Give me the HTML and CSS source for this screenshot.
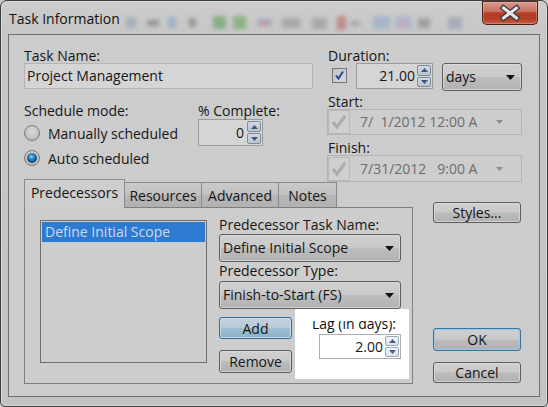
FILE: index.html
```html
<!DOCTYPE html>
<html>
<head>
<meta charset="utf-8">
<title>Task Information</title>
<link rel="stylesheet" href="styles.css">
</head>
<body>
<div class="window">
  <div class="titlebar">
    <div class="title">Task Information</div>
    <svg class="blur-icons" width="345" height="22" viewBox="0 0 345 22">
      <g>
        <rect x="6" y="4" width="10" height="11" fill="#8d9cb4"/>
        <rect x="27" y="7" width="12" height="6" fill="#6a6a6a"/>
        <rect x="48" y="4" width="8" height="11" fill="#7d9cc8"/>
        <rect x="69" y="5" width="7" height="9" fill="#6e6e6e"/>
        <rect x="93" y="3" width="13" height="13" fill="#4f9a4f"/>
        <rect x="113" y="3" width="13" height="13" fill="#58a04a"/>
        <rect x="137" y="6" width="15" height="7" fill="#8a8ec0"/>
        <rect x="140" y="8" width="6" height="5" fill="#c07070"/>
        <rect x="162" y="5" width="18" height="10" fill="#8e8e8e"/>
        <rect x="192" y="5" width="15" height="11" fill="#8e8e8e"/>
        <rect x="217" y="3" width="9" height="14" fill="#b85a5a"/>
        <rect x="230" y="8" width="10" height="5" fill="#909090"/>
        <rect x="253" y="3" width="17" height="13" fill="#8aa6cc"/>
        <rect x="275" y="3" width="17" height="13" fill="#a0a6d0"/>
        <rect x="280" y="8" width="6" height="6" fill="#c88aa0"/>
        <rect x="298" y="5" width="12" height="10" fill="#7e7e7e"/>
        <rect x="328" y="4" width="14" height="12" fill="#8a98b0"/>
      </g>
    </svg>
    <div class="close">
      <svg width="54" height="22" viewBox="0 0 54 22">
        <path d="M20.5 6 L33.5 16 M20.5 16 L33.5 6" stroke="#3a3a3a" stroke-width="5.5" stroke-linecap="square" fill="none"/>
        <path d="M20.5 6 L33.5 16 M20.5 16 L33.5 6" stroke="#e6e6e6" stroke-width="3" stroke-linecap="square" fill="none"/>
      </svg>
    </div>
  </div>

  <div class="client">
    <div class="top">
      <div class="left">
        <div class="lbl">Task Name:</div>
        <div class="textbox">Project Management</div>
        <div class="sched">
          <div class="sched-mode">
            <div class="lbl">Schedule mode:</div>
            <div class="radio-row first"><span class="radio"></span><span class="rtext">Manually scheduled</span></div>
            <div class="radio-row"><span class="radio on"></span><span class="rtext">Auto scheduled</span></div>
          </div>
          <div class="pct">
            <div class="lbl">% Complete:</div>
            <div class="spin pct-spin">
              <span class="val">0</span>
              <span class="sbtns">
                <span class="sb"><svg width="7" height="4" viewBox="0 0 7 4"><path d="M0 4 L3.5 0 L7 4Z"/></svg></span>
                <span class="sb"><svg width="7" height="4" viewBox="0 0 7 4"><path d="M0 0 L7 0 L3.5 4Z"/></svg></span>
              </span>
            </div>
          </div>
        </div>
      </div>

      <div class="right">
        <div class="lbl">Duration:</div>
        <div class="dur-row">
          <span class="check"><svg width="13" height="13" viewBox="0 0 13 13"><path d="M3 6.5 L5.5 9.5 L10 2.5" stroke="#2d4d8f" stroke-width="2" fill="none"/></svg></span>
          <div class="spin dur-spin">
            <span class="val">21.00</span>
            <span class="sbtns">
              <span class="sb"><svg width="7" height="4" viewBox="0 0 7 4"><path d="M0 4 L3.5 0 L7 4Z"/></svg></span>
              <span class="sb"><svg width="7" height="4" viewBox="0 0 7 4"><path d="M0 0 L7 0 L3.5 4Z"/></svg></span>
            </span>
          </div>
          <div class="combo days"><span>days</span><svg class="arr" width="9" height="5" viewBox="0 0 9 5"><path d="M0 0 L9 0 L4.5 5Z"/></svg></div>
        </div>
        <div class="lbl start-lbl">Start:</div>
        <div class="picker">
          <span class="pchk"><svg width="20" height="22" viewBox="0 0 20 22"><path d="M4 11 L8 16 L16 5" stroke="#acacac" stroke-width="3" fill="none"/></svg></span>
          <span class="ptext">7/  1/2012 12:00 A</span>
          <svg class="parr" width="7" height="4" viewBox="0 0 7 4"><path d="M0 0 L7 0 L3.5 4Z"/></svg>
        </div>
        <div class="lbl finish-lbl">Finish:</div>
        <div class="picker finish">
          <span class="pchk"><svg width="20" height="22" viewBox="0 0 20 22"><path d="M4 11 L8 16 L16 5" stroke="#acacac" stroke-width="3" fill="none"/></svg></span>
          <span class="ptext">7/31/2012   9:00 A</span>
          <svg class="parr" width="7" height="4" viewBox="0 0 7 4"><path d="M0 0 L7 0 L3.5 4Z"/></svg>
        </div>
      </div>
    </div>

    <div class="bottom">
      <div class="tabs-wrap">
        <div class="tabs">
          <div class="tab sel t-pred">Predecessors</div>
          <div class="tab t-res">Resources</div>
          <div class="tab t-adv">Advanced</div>
          <div class="tab t-notes">Notes</div>
        </div>
        <div class="panel">
          <div class="listbox"><div class="item sel">Define Initial Scope</div></div>
          <div class="pred">
            <div class="plabel">Predecessor Task Name:</div>
            <div class="combo pcombo"><span>Define Initial Scope</span><svg class="arr" width="9" height="5" viewBox="0 0 9 5"><path d="M0 0 L9 0 L4.5 5Z"/></svg></div>
            <div class="plabel t2">Predecessor Type:</div>
            <div class="combo pcombo"><span>Finish-to-Start (FS)</span><svg class="arr" width="9" height="5" viewBox="0 0 9 5"><path d="M0 0 L9 0 L4.5 5Z"/></svg></div>
            <div class="pred-bottom">
              <div class="btn-col">
                <div class="btn add">Add</div>
                <div class="btn remove">Remove</div>
              </div>
              <div class="hilite">
                <div class="lag-clip"><div class="lag-lbl">Lag (in days):</div></div>
                <div class="spin lag-spin">
                  <span class="val">2.00</span>
                  <span class="sbtns">
                    <span class="sb"><svg width="7" height="4" viewBox="0 0 7 4"><path d="M0 4 L3.5 0 L7 4Z"/></svg></span>
                    <span class="sb"><svg width="7" height="4" viewBox="0 0 7 4"><path d="M0 0 L7 0 L3.5 4Z"/></svg></span>
                  </span>
                </div>
              </div>
            </div>
          </div>
        </div>
      </div>
      <div class="side-btns">
        <div class="btn styles">Styles...</div>
        <div class="btn ok">OK</div>
        <div class="btn cancel">Cancel</div>
      </div>
    </div>
  </div>
</div>
</body>
</html>
```

FILE: styles.css
```css
* { box-sizing: border-box; }
html, body { margin: 0; padding: 0; }
body {
  width: 548px;
  height: 407px;
  overflow: hidden;
  background: #c9c9c9;
  font-family: "Open Sans", "Noto Sans", sans-serif;
  font-size: 14px;
  color: #161616;
}

.window {
  width: 548px;
  height: 407px;
  border: 1px solid #3e3e3e;
  border-radius: 7px 7px 5px 5px;
  background: linear-gradient(180deg, #cdcdcd 0, #c7c7c7 30px, #c3c3c3 100%);
  box-shadow: inset 1px 1px 0 #dadada, inset -1px -1px 0 #d4d4d4;
  display: flex;
  flex-direction: column;
}

/* title bar */
.titlebar {
  height: 33px;
  flex-shrink: 0;
  display: flex;
  align-items: flex-start;
}
.title {
  margin: 9px 0 0 8px;
  width: 111px;
  line-height: 18px;
  white-space: nowrap;
  color: #101010;
}
.blur-icons {
  margin-top: 12px;
  flex-shrink: 0;
  filter: blur(2.2px);
  opacity: 0.55;
}
.close {
  margin-left: auto;
  margin-right: 9px;
  width: 56px;
  height: 24px;
  border: 1px solid #4b2017;
  border-top-color: #5a2a20;
  border-radius: 0 0 5px 5px;
  background: linear-gradient(180deg, #d69a90 0%, #c97262 42%, #b53c25 50%, #b4402a 78%, #c85c40 100%);
  box-shadow: inset 0 0 0 1px rgba(255, 220, 210, 0.3);
}
.close svg { display: block; }

/* client area */
.client {
  margin: 0 7px;
  height: 363px;
  border: 1px solid #6f6f6f;
  background: #cccccc;
}

.lbl {
  height: 16px;
  line-height: 17px;
  white-space: nowrap;
}

.top {
  display: flex;
  height: 144px;
  padding-left: 15px;
}
.left { width: 289px; padding-top: 12px; flex-shrink: 0; }
.textbox {
  height: 26px;
  border: 1px solid #b4b4b4;
  background: #d5d5d5;
  line-height: 24px;
  padding-left: 2px;
  white-space: nowrap;
}
.sched { display: flex; margin-top: 13px; }
.sched-mode { width: 174px; }
.radio-row { height: 25px; display: flex; align-items: center; }
.radio-row.first { margin-top: 2px; }
.radio {
  width: 16px;
  height: 16px;
  border-radius: 50%;
  border: 1px solid #7b7b7b;
  background: radial-gradient(circle at 50% 40%, #dadada 0, #cacaca 45%, #a9a9a9 100%);
  margin-right: 8px;
  flex-shrink: 0;
  display: flex;
  align-items: center;
  justify-content: center;
}
.radio.on::after {
  content: "";
  width: 10px;
  height: 10px;
  border-radius: 50%;
  background: radial-gradient(circle at 45% 38%, #9fe0ff 0, #3f98d6 22%, #145a90 55%, #0a2640 100%);
}
.rtext { padding-top: 2px; line-height: 19px; white-space: nowrap; }

.pct-spin { margin-top: 1px; width: 65px; height: 27px; }

/* spin boxes */
.spin {
  display: flex;
  border: 1px solid #9c9c9c;
  background: #d5d5d5;
}
.spin .val {
  flex: 1;
  text-align: right;
  padding-right: 3px;
  line-height: 24px;
}
.pct-spin .val { line-height: 25px; }
.sbtns {
  display: flex;
  flex-direction: column;
  width: 15px;
  padding: 1px 1px 1px 0;
  gap: 1px;
  flex-shrink: 0;
}
.sb {
  flex: 1;
  border: 1px solid #7f8ca0;
  border-radius: 2px;
  background: linear-gradient(180deg, #d4d9df, #bcc3cc);
  display: flex;
  align-items: center;
  justify-content: center;
}
.sb svg { display: block; fill: #3d5583; }

.right { margin-left: 14px; width: 195px; padding-top: 12px; flex-shrink: 0; }
.right .lbl { padding-left: 1px; }
.dur-row { display: flex; height: 28px; align-items: flex-start; }
.check {
  width: 15px;
  height: 15px;
  margin: 5px 0 0 5px;
  border: 1px solid #777777;
  background: linear-gradient(135deg, #bfc3ca, #d8d9dc);
  display: flex;
  align-items: center;
  justify-content: center;
}
.check svg { display: block; }
.dur-spin { margin-left: 9px; width: 77px; height: 26px; }
.dur-spin .val { padding-right: 2px; }

.combo {
  display: flex;
  align-items: center;
  border: 1px solid #5f5f5f;
  border-radius: 3px;
  background: linear-gradient(180deg, #d0d0d0 0%, #c9c9c9 48%, #bdbdbd 52%, #b2b2b2 100%);
  box-shadow: inset 0 0 0 1px rgba(222, 222, 222, 0.7);
  padding-left: 3px;
  line-height: 26px;
  white-space: nowrap;
}
.combo .arr { margin-left: auto; margin-right: 6px; display: block; fill: #111; }
.days { margin-left: 9px; width: 80px; height: 28px; }

.start-lbl { margin-top: 2px; }
.finish-lbl { margin-top: 4px; }
.picker {
  display: flex;
  align-items: center;
  height: 26px;
  border: 1px solid #b3b3b3;
  background: #cdcdcd;
  color: #6c6c6c;
  line-height: 24px;
}
.picker.finish { height: 27px; }
.pchk {
  width: 22px;
  height: 24px;
  border: 1px solid #b9b9b9;
  background: #cfcfcf;
  flex-shrink: 0;
}
.pchk svg { display: block; }
.ptext {
  margin-left: 10px;
  white-space: pre;
}
.parr { margin-left: auto; margin-right: 18px; display: block; fill: #8d8d8d; }

/* bottom area */
.bottom { display: flex; padding-left: 15px; height: 205px; }
.tabs-wrap { width: 389px; display: flex; flex-direction: column; flex-shrink: 0; }
.tabs {
  display: flex;
  height: 28px;
  align-items: flex-end;
  position: relative;
  z-index: 1;
}
.tab {
  height: 25px;
  border: 1px solid #8a8a8a;
  border-bottom: none;
  text-align: center;
  padding-top: 2px;
  line-height: 22px;
  white-space: nowrap;
  background: linear-gradient(180deg, #cacaca 0%, #c1c1c1 50%, #b6b6b6 52%, #b1b1b1 100%);
  margin-left: -1px;
}
.tab.sel {
  height: 29px;
  margin-bottom: -1px;
  margin-left: 0;
  background: #cecece;
  position: relative;
  z-index: 2;
}
.t-pred { width: 101px; }
.t-res { width: 78px; }
.t-adv { width: 78px; }
.t-notes { width: 59px; }

.panel {
  height: 177px;
  border: 1px solid #7e7e7e;
  background: #cdcdcd;
  display: flex;
  padding: 8px 0 0 15px;
}
.listbox {
  margin-top: 4px;
  width: 167px;
  height: 143px;
  border: 1px solid #6e6e6e;
  padding: 1px;
  background: #cdcdcd;
  flex-shrink: 0;
}
.item.sel {
  height: 20px;
  line-height: 20px;
  padding-left: 3px;
  background: #2c7bd1;
  color: #d3d7ec;
  white-space: nowrap;
}
.pred { margin-left: 12px; width: 182px; flex-shrink: 0; }
.plabel { height: 18px; line-height: 18px; white-space: nowrap; }
.plabel.t2 { height: 19px; }
.pcombo { height: 28px; }
.pred-bottom { display: flex; }
.btn-col { width: 73px; flex-shrink: 0; }

.btn {
  border: 1px solid #5d5d5d;
  border-radius: 3px;
  background: linear-gradient(180deg, #d0d0d0 0%, #c9c9c9 48%, #bcbcbc 52%, #b1b1b1 100%);
  box-shadow: inset 0 0 0 1px rgba(222, 222, 222, 0.75);
  text-align: center;
  padding-top: 1px;
  white-space: nowrap;
}
.add {
  margin-top: 8px;
  height: 22px;
  line-height: 19px;
  border-color: #3a6a8e;
  background: linear-gradient(180deg, #c4d3dc 0%, #b6cad6 48%, #9fbfd1 52%, #8ab3c9 100%);
  box-shadow: inset 0 0 0 1px rgba(210, 228, 238, 0.8);
}
.remove { margin-top: 11px; height: 23px; line-height: 20px; }

.hilite {
  margin-left: 3px;
  width: 114px;
  height: 70px;
  background: #ffffff;
  flex-shrink: 0;
  padding-left: 17px;
}
.lag-clip { margin-top: 12px; height: 13px; overflow: hidden; }
.lag-lbl { margin-top: -6px; line-height: 18px; white-space: nowrap; color: #111; }
.lag-spin {
  margin-left: 7px;
  width: 82px;
  height: 25px;
  background: #ffffff;
  border-color: #abadb3;
}
.lag-spin .val { line-height: 23px; padding-right: 2px; }
.lag-spin .sb { border-color: #9aa5b8; background: linear-gradient(180deg, #f3f5f8, #dce2e9); }
.lag-spin .sb svg { fill: #4a5f88; }

.side-btns { margin-left: 20px; width: 88px; flex-shrink: 0; }
.styles { margin-top: 23px; height: 21px; line-height: 18px; }
.ok {
  margin-top: 105px;
  height: 23px;
  line-height: 20px;
  border-color: #3a74a3;
  box-shadow: inset 0 0 0 1px rgba(150, 200, 228, 0.9);
}
.cancel { margin-top: 11px; height: 21px; line-height: 18px; }
```
